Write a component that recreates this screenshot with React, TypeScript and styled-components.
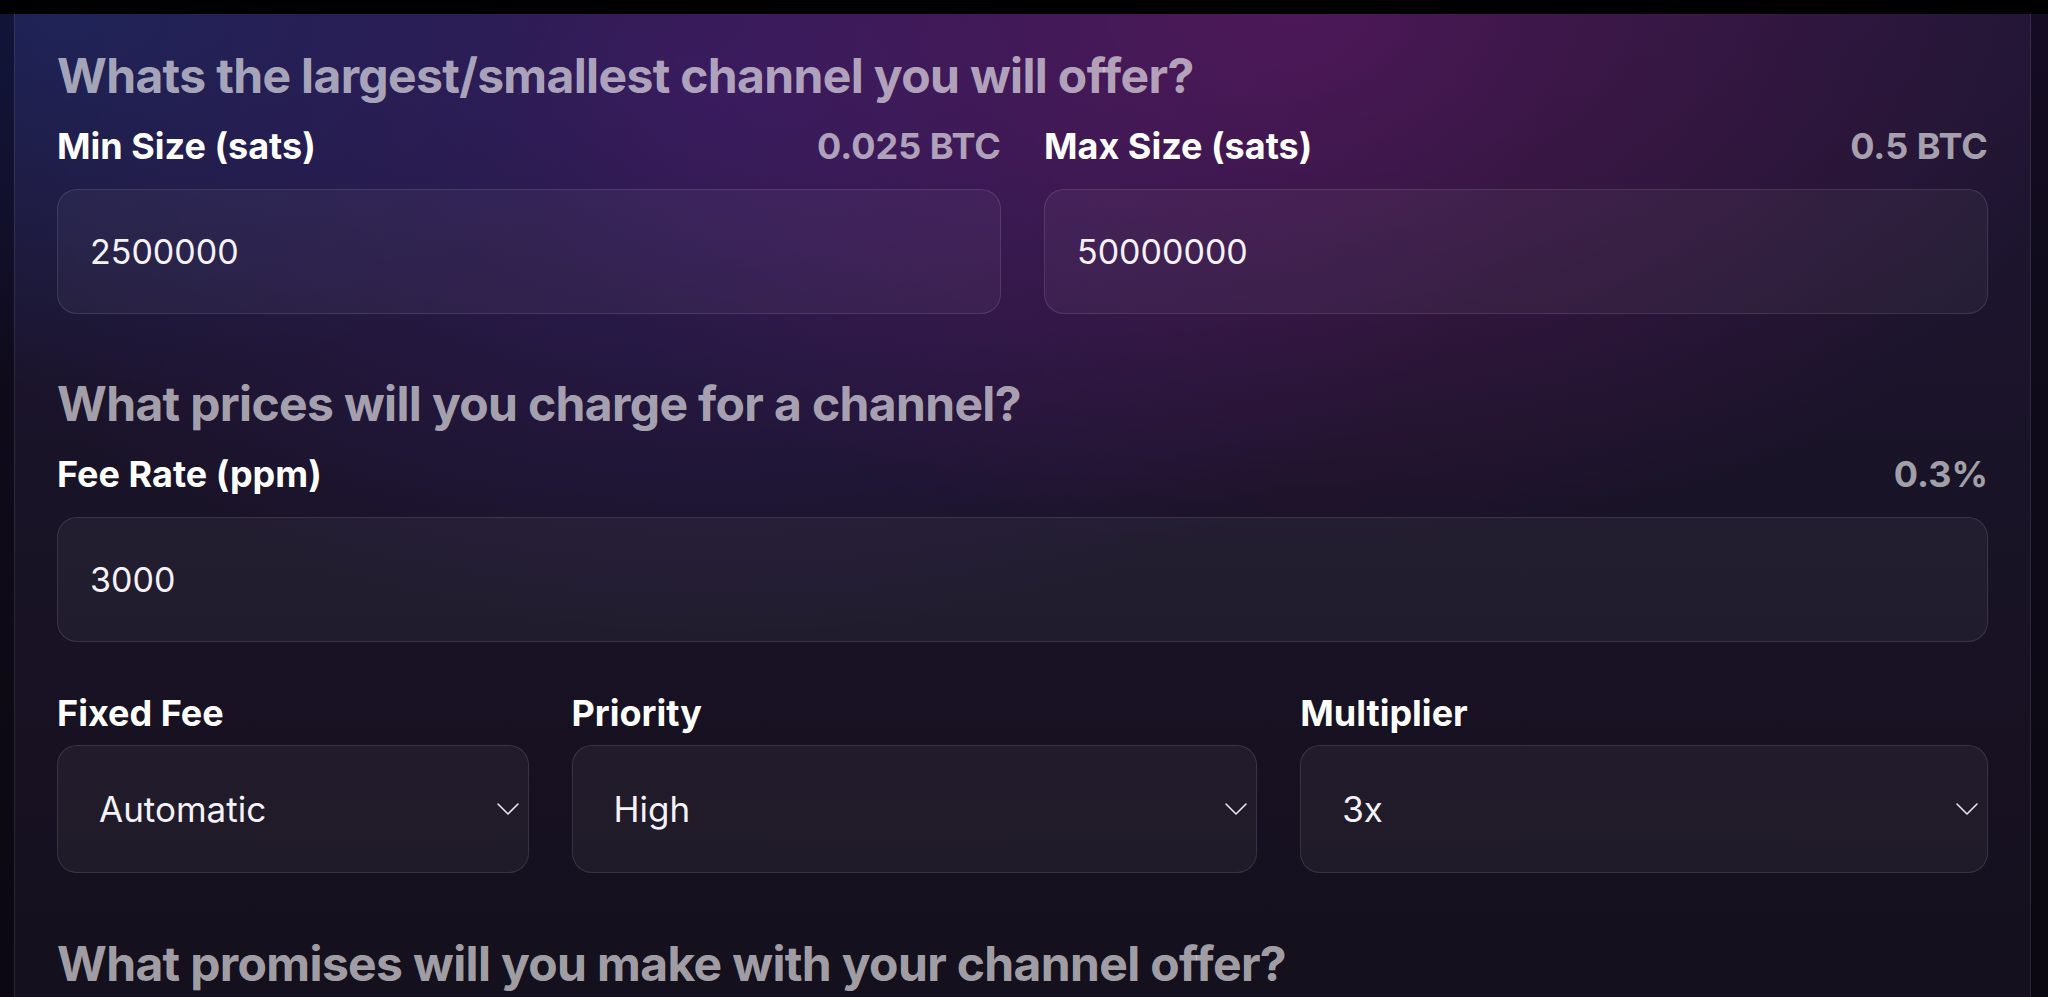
import React from 'react';
import styled, { createGlobalStyle } from 'styled-components';

const GlobalStyle = createGlobalStyle`
    html, body {
        margin: 0;
        padding: 0;
        background: #0b0a13;
    }
    body {
        font-family: Inter, "Noto Sans", "Liberation Sans", sans-serif;
        -webkit-font-smoothing: antialiased;
    }
    * {
        box-sizing: border-box;
    }
`;

const Page = styled.div`
    height: 997px;
    overflow: hidden;
    display: flex;
    flex-direction: column;
    background:
        radial-gradient(ellipse 1150px 760px at 1300px 10px, rgba(100, 20, 100, 0.62), transparent 72%),
        radial-gradient(ellipse 1150px 760px at 720px 90px, rgba(60, 30, 122, 0.58), transparent 72%),
        radial-gradient(ellipse 800px 520px at 60px 0px, rgba(22, 34, 86, 0.85), transparent 75%),
        linear-gradient(180deg, #1a1230 0%, #150f23 50%, #110c19 100%);
`;

const TopBar = styled.div`
    height: 14px;
    flex: none;
    background: #000;
    position: relative;
    z-index: 1;
`;

const Panel = styled.div`
    flex: 1;
    margin: 0 17px 0 14px;
    padding: 33px 42px 0;
    border-left: 1px solid rgba(255, 255, 255, 0.09);
    border-right: 1px solid rgba(255, 255, 255, 0.09);
    background: rgba(255, 255, 255, 0.02);
    box-shadow: 0 0 0 40px rgba(0, 0, 0, 0.3);
`;

const Heading = styled.h2<{ $top?: number }>`
    margin: ${(p) => p.$top ?? 0}px 0 21px;
    font-size: 48px;
    line-height: 58px;
    font-weight: 700;
    letter-spacing: -0.65px;
    color: rgba(255, 255, 255, 0.62);
    white-space: nowrap;
`;

const Row = styled.div<{ $cols: string; $top?: number }>`
    display: grid;
    grid-template-columns: ${(p) => p.$cols};
    column-gap: 43px;
    margin-top: ${(p) => p.$top ?? 0}px;
`;

const Field = styled.div`
    display: flex;
    flex-direction: column;
    min-width: 0;
`;

const LabelRow = styled.div<{ $gap: number }>`
    display: flex;
    justify-content: space-between;
    align-items: baseline;
    margin-bottom: ${(p) => p.$gap}px;
    font-size: 36px;
    line-height: 40px;
    font-weight: 700;
    white-space: nowrap;
`;

const Label = styled.span`
    color: #ffffff;
`;

const Hint = styled.span`
    color: rgba(255, 255, 255, 0.6);
`;

const TextInput = styled.input`
    height: 125px;
    width: 100%;
    padding: 0 32px;
    border: 1px solid rgba(255, 255, 255, 0.11);
    border-radius: 20px;
    background: rgba(255, 255, 255, 0.045);
    color: #f4f2f8;
    font-family: inherit;
    font-size: 34px;
    outline: none;
`;

const SelectWrap = styled.div`
    position: relative;
`;

const Select = styled.select`
    height: 128px;
    width: 100%;
    padding: 0 40px 0 41px;
    border: 1px solid rgba(255, 255, 255, 0.11);
    border-radius: 20px;
    background: rgba(255, 255, 255, 0.045);
    color: #f4f2f8;
    font-family: inherit;
    font-size: 35px;
    appearance: none;
    -webkit-appearance: none;
    outline: none;
`;

const Chevron = styled.svg`
    position: absolute;
    right: 9px;
    top: 50%;
    margin-top: -7px;
    pointer-events: none;
`;

const ChevronDown = () => (
    <Chevron width="24" height="14" viewBox="0 0 24 14" fill="none">
        <path d="M2 2 L12 12 L22 2" stroke="#e6e3ee" strokeWidth="1.6" strokeLinecap="round" strokeLinejoin="round" />
    </Chevron>
);

interface InputFieldProps {
    label: string;
    hint?: string;
    value: string;
}

const InputField = ({ label, hint, value }: InputFieldProps) => (
    <Field>
        <LabelRow $gap={23}>
            <Label>{label}</Label>
            {hint && <Hint>{hint}</Hint>}
        </LabelRow>
        <TextInput defaultValue={value} />
    </Field>
);

interface SelectFieldProps {
    label: string;
    value: string;
    options: string[];
}

const SelectField = ({ label, value, options }: SelectFieldProps) => (
    <Field>
        <LabelRow $gap={12}>
            <Label>{label}</Label>
        </LabelRow>
        <SelectWrap>
            <Select defaultValue={value}>
                {options.map((o) => (
                    <option key={o}>{o}</option>
                ))}
            </Select>
            <ChevronDown />
        </SelectWrap>
    </Field>
);

export default function App() {
    return (
        <>
            <GlobalStyle />
            <Page>
                <TopBar />
                <Panel>
                    <Heading>Whats the largest/smallest channel you will offer?</Heading>
                    <Row $cols="1fr 1fr">
                        <InputField label="Min Size (sats)" hint="0.025 BTC" value="2500000" />
                        <InputField label="Max Size (sats)" hint="0.5 BTC" value="50000000" />
                    </Row>

                    <Heading $top={61}>What prices will you charge for a channel?</Heading>
                    <Row $cols="1fr">
                        <InputField label="Fee Rate (ppm)" hint="0.3%" value="3000" />
                    </Row>
                    <Row $cols="471fr 685fr 687fr" $top={51}>
                        <SelectField label="Fixed Fee" value="Automatic" options={['Automatic', 'Manual']} />
                        <SelectField label="Priority" value="High" options={['Low', 'Medium', 'High']} />
                        <SelectField label="Multiplier" value="3x" options={['1x', '2x', '3x', '4x']} />
                    </Row>

                    <Heading $top={62}>What promises will you make with your channel offer?</Heading>
                </Panel>
            </Page>
        </>
    );
}
